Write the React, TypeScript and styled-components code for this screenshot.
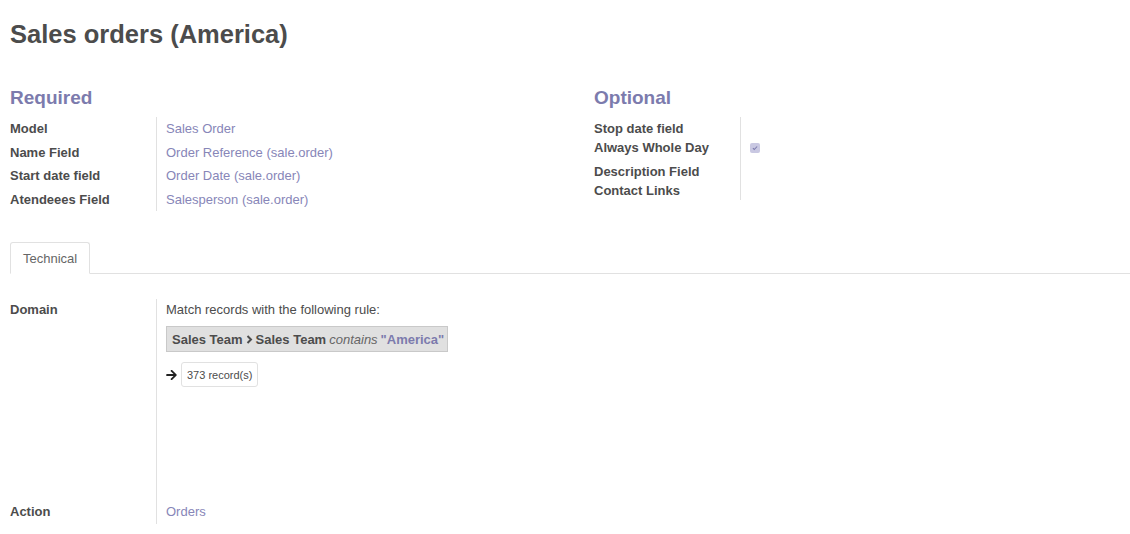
import styled, { createGlobalStyle } from "styled-components";

const GlobalStyle = createGlobalStyle`
  body {
    margin: 0;
    background: #fff;
    font-family: "Liberation Sans", Arial, sans-serif;
    color: #4c4c4c;
  }
`;

const Sheet = styled.div`
  padding: 0 0 0 10px;
`;

const Title = styled.h1`
  margin: 0;
  padding-top: 19px;
  font-size: 25.5px;
  line-height: 30px;
  font-weight: bold;
  color: #4c4c4c;
`;

const Groups = styled.div`
  display: grid;
  grid-template-columns: 584px 1fr;
  margin-top: 37px;
`;

const GroupTitle = styled.h2`
  margin: 0 0 7px;
  font-size: 19px;
  line-height: 24px;
  font-weight: bold;
  color: #7c7bad;
`;

const FieldTable = styled.div`
  display: grid;
  grid-template-columns: 147px 1fr;
`;

const Label = styled.div<{ $h: number; $pt?: number }>`
  height: ${(p) => p.$h}px;
  padding-top: ${(p) => p.$pt ?? 0}px;
  display: flex;
  align-items: center;
  border-right: 1px solid #e1e1e1;
  font-size: 13px;
  font-weight: bold;
  color: #4c4c4c;
  box-sizing: border-box;
`;

const Value = styled.div<{ $h: number; $pt?: number }>`
  height: ${(p) => p.$h}px;
  padding-top: ${(p) => p.$pt ?? 0}px;
  padding-left: 9px;
  display: flex;
  align-items: center;
  font-size: 13px;
  color: #8786b8;
  box-sizing: border-box;
`;

const Check = styled.span`
  width: 10px;
  height: 10px;
  margin-top: -4px;
  border-radius: 2px;
  background: #c9c8e2;
  display: flex;
  align-items: center;
  justify-content: center;
`;

const Tabs = styled.div`
  display: flex;
  margin-top: 31px;
  border-bottom: 1px solid #e1e1e1;
`;

const Tab = styled.div`
  height: 30px;
  padding: 0 12px;
  margin-bottom: -1px;
  display: flex;
  align-items: center;
  border: 1px solid #e1e1e1;
  border-bottom-color: #fff;
  border-radius: 3px 3px 0 0;
  background: #fff;
  font-size: 13px;
  color: #666;
`;

const TabBody = styled.div`
  display: grid;
  grid-template-columns: 147px 1fr;
  margin-top: 25px;
`;

const TopLabel = styled.div<{ $h: number }>`
  height: ${(p) => p.$h}px;
  padding-top: 3px;
  border-right: 1px solid #e1e1e1;
  font-size: 13px;
  font-weight: bold;
  box-sizing: border-box;
`;

const DomainCell = styled.div`
  padding: 3px 0 0 9px;
  font-size: 13px;
`;

const Hint = styled.div`
  color: #4c4c4c;
  line-height: 16px;
`;

const Rule = styled.div`
  display: inline-flex;
  align-items: center;
  gap: 3px;
  margin-top: 8px;
  height: 24px;
  padding: 0 3px 0 5px;
  background: #e0e0e0;
  border: 1px solid #c9c9c9;
  font-weight: bold;
  color: #4c4c4c;
`;

const Op = styled.i`
  font-weight: normal;
  color: #666;
`;

const Quoted = styled.span`
  color: #7c7bad;
`;

const CountRow = styled.div`
  display: flex;
  align-items: center;
  gap: 4px;
  margin-top: 10px;
`;

const CountButton = styled.div`
  height: 23px;
  padding: 0 5px;
  display: flex;
  align-items: center;
  border: 1px solid #e1e1e1;
  border-radius: 3px;
  font-size: 11px;
  color: #4c4c4c;
`;

const ActionValue = styled.div`
  padding: 3px 0 0 9px;
  font-size: 13px;
  color: #8786b8;
`;

const Arrow = () => (
  <svg width="11" height="12" viewBox="0 0 448 512">
    <path
      fill="#222"
      d="M190.5 66.9l22.2-22.2c9.4-9.4 24.6-9.4 33.9 0L441 239c9.4 9.4 9.4 24.6 0 33.9L246.6 467.3c-9.4 9.4-24.6 9.4-33.9 0l-22.2-22.2c-9.5-9.5-9.3-25 .4-34.3L311.4 296H24c-13.3 0-24-10.7-24-24v-32c0-13.3 10.7-24 24-24h287.4L190.9 101.2c-9.8-9.3-10-24.8-.4-34.3z"
    />
  </svg>
);

const Chevron = () => (
  <svg width="7" height="9" viewBox="0 0 7 9">
    <path d="M1.5 1l3.5 3.5L1.5 8" stroke="#4c4c4c" strokeWidth="2" fill="none" />
  </svg>
);

const required = [
  ["Model", "Sales Order"],
  ["Name Field", "Order Reference (sale.order)"],
  ["Start date field", "Order Date (sale.order)"],
  ["Atendeees Field", "Salesperson (sale.order)"],
];

const optional: [string, number, number, boolean][] = [
  ["Stop date field", 21, 2, false],
  ["Always Whole Day", 24, 0, true],
  ["Description Field", 19, 0, false],
  ["Contact Links", 19, 0, false],
];

export default function App() {
  return (
    <>
      <GlobalStyle />
      <Sheet>
        <Title>Sales orders (America)</Title>
        <Groups>
          <div>
            <GroupTitle>Required</GroupTitle>
            <FieldTable>
              {required.map(([l, v]) => (
                <>
                  <Label key={l} $h={23.5}>{l}</Label>
                  <Value key={l + "v"} $h={23.5}>{v}</Value>
                </>
              ))}
            </FieldTable>
          </div>
          <div>
            <GroupTitle>Optional</GroupTitle>
            <FieldTable>
              {optional.map(([l, h, pt, c]) => (
                <>
                  <Label key={l} $h={h} $pt={pt}>
                    <span style={{ marginTop: c ? -5 : 0 }}>{l}</span>
                  </Label>
                  <Value key={l + "v"} $h={h} $pt={pt}>
                    {c && (
                      <Check>
                        <svg width="6" height="6" viewBox="0 0 10 10">
                          <path d="M1.5 5.2l2.3 2.3 4.7-5" stroke="#7c7bad" strokeWidth="1.8" fill="none" />
                        </svg>
                      </Check>
                    )}
                  </Value>
                </>
              ))}
            </FieldTable>
          </div>
        </Groups>
        <Tabs>
          <Tab>Technical</Tab>
        </Tabs>
        <TabBody>
          <TopLabel $h={202}>Domain</TopLabel>
          <DomainCell>
            <Hint>Match records with the following rule:</Hint>
            <Rule>
              Sales Team <Chevron /> Sales Team <Op>contains</Op>
              <Quoted>"America"</Quoted>
            </Rule>
            <CountRow>
              <Arrow />
              <CountButton>373 record(s)</CountButton>
            </CountRow>
          </DomainCell>
          <TopLabel $h={23}>Action</TopLabel>
          <ActionValue>Orders</ActionValue>
        </TabBody>
      </Sheet>
    </>
  );
}
